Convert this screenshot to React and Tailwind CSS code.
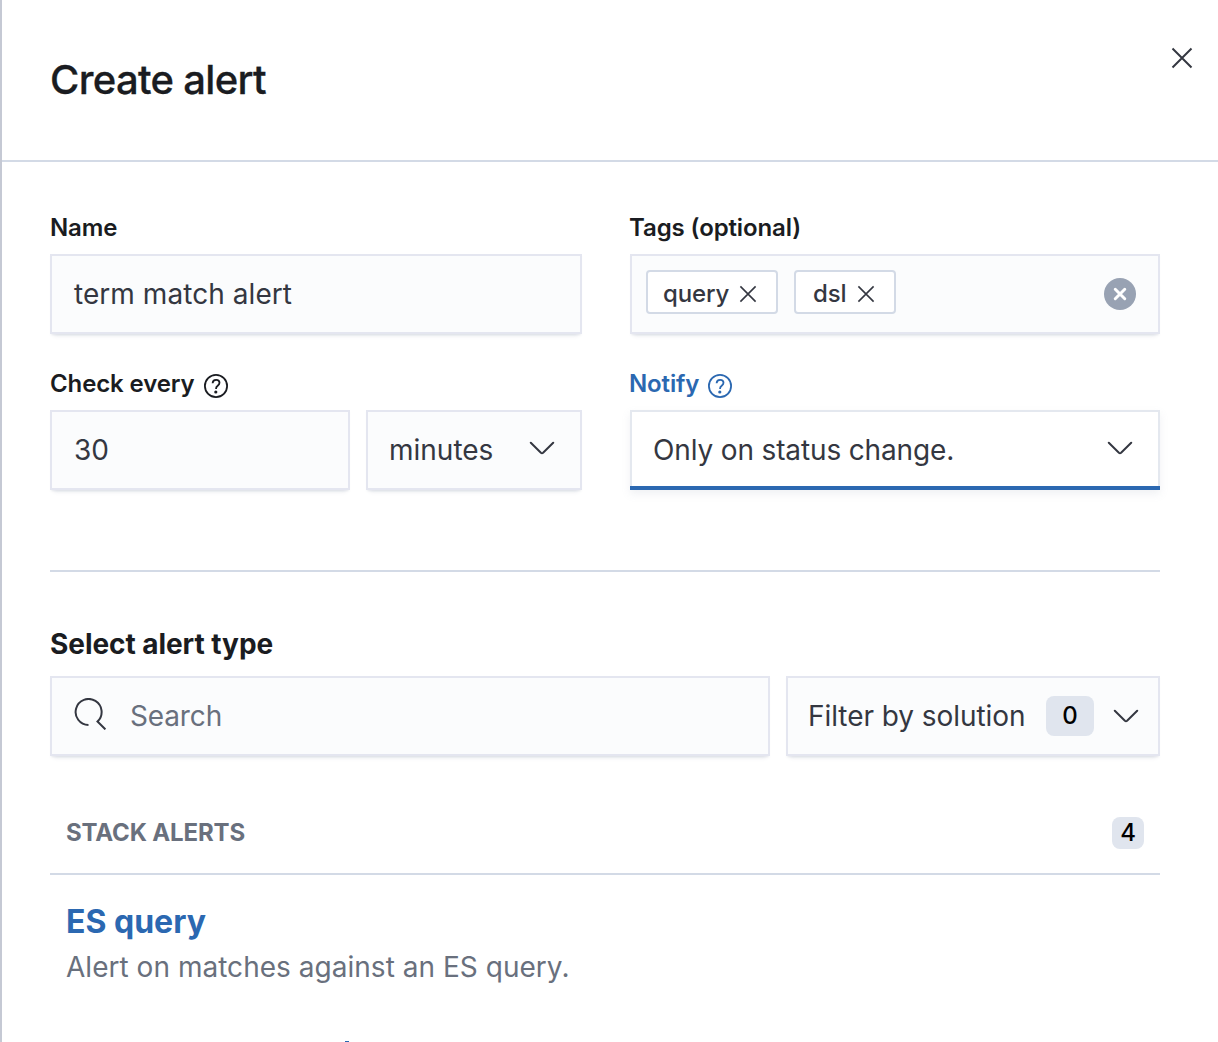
import React from "react";

const field =
  "flex h-20 items-center border-2 border-[#e4e6f0] bg-[#fbfcfd] text-[28px] shadow-[0_2px_2px_-1px_rgba(152,162,179,0.2),0_6px_4px_-4px_rgba(152,162,179,0.2)]";

const label = "flex h-11 items-start text-2xl leading-9 font-semibold tracking-[-0.005em]";

function Cross({ className }) {
  return (
    <svg viewBox="0 0 20 20" className={className} fill="none" stroke="currentColor">
      <path d="M0.5 0.5 19.5 19.5M19.5 0.5 0.5 19.5" />
    </svg>
  );
}

function Chevron({ className = "" }) {
  return (
    <svg viewBox="0 0 26 14" className={`h-3.5 w-[26px] shrink-0 ${className}`} fill="none" stroke="#343741" strokeWidth="2" strokeLinecap="round">
      <path d="M1.8 1.8 L11.9 11.8 Q13 12.8 14.1 11.8 L24.2 1.8" />
    </svg>
  );
}

function Help() {
  return (
    <svg viewBox="0 0 24 24" className="mt-2 ml-[9px] size-6 shrink-0" fill="none" stroke="currentColor" strokeWidth="1.8">
      <circle cx="12" cy="12" r="11.1" />
      <path d="M8.6 9.2C8.7 7 10.1 5.8 12.1 5.8c2 0 3.4 1.2 3.4 3 0 1.3-.7 2.100-1.800 2.900-1.100.8-1.600 1.300-1.600 2.600v.6" />
      <circle cx="11.8" cy="18" r="1.6" fill="currentColor" stroke="none" />
    </svg>
  );
}

function Tag({ label, className }) {
  return (
    <span className={`-mt-1 flex h-11 items-center rounded-[4px] border-2 border-[#d3dae6] bg-white pt-[3px] text-2xl font-medium tracking-[-0.005em] text-[#343741] ${className}`}>
      {label}
      <Cross className="mt-px ml-[11.2px] size-4 overflow-visible stroke-[2]" />
    </span>
  );
}

export default function App() {
  return (
    <div className="h-[1042px] overflow-hidden border-l-2 border-[#c5c9d4] bg-white font-['Inter',sans-serif] text-[#1a1c21]">
      <header className="flex h-[162px] items-start justify-between border-b-2 border-[#d3dae6] pl-12 pr-[26px]">
        <h1 className="mt-14 text-[40px] leading-12 font-medium tracking-[-0.017em] [-webkit-text-stroke:0.3px_currentColor]">Create alert</h1>
        <Cross className="mt-12 size-5 overflow-visible stroke-2 text-[#343741]" />
      </header>

      <main className="w-[1158px] pl-12">
        <div className="grid grid-cols-[532px_530px] gap-x-12 pt-12">
          <section>
            <div className={label}>Name</div>
            <div className={`${field} px-[22px] tracking-[0.002em] text-[#343741]`}>term match alert</div>
          </section>
          <section>
            <div className={`${label} -ml-px`}>Tags (optional)</div>
            <div className={`${field} pl-3.5 pr-[22px]`}>
              <Tag label="query" className="w-[132px] pl-[15px]" />
              <Tag label="dsl" className="ml-4 w-[102px] pl-[17px]" />
              <span className="ml-auto flex size-8 items-center justify-center rounded-full bg-[#98a2b3] text-white">
                <Cross className="size-2.5 overflow-visible stroke-[6] [stroke-linecap:round]" />
              </span>
            </div>
          </section>
          <section className="pt-8">
            <div className={label}>
              Check every <Help />
            </div>
            <div className="flex gap-4">
              <div className={`${field} w-[300px] px-[22px] text-[#343741]`}>30</div>
              <div className={`${field} w-[216px] justify-between pl-[21px] pr-[25px] text-[#343741]`}>
                minutes <Chevron className="-mt-1" />
              </div>
            </div>
          </section>
          <section className="pt-8">
            <div className={`${label} -ml-px text-[#2b68b1]`}>
              Notify <Help />
            </div>
            <div className="h-20 bg-[#2b68b1] pb-1 shadow-[0_4px_8px_rgba(152,162,179,0.15)]">
              <div className="flex h-19 items-center justify-between border-2 border-b-0 border-[#e4e8ef] bg-white pt-0.5 pl-[21px] pr-[25px] text-[28px] tracking-[-0.005em] text-[#343741]">
                Only on status change. <Chevron className="-mt-1" />
              </div>
            </div>
          </section>
        </div>

        <hr className="mt-20 border-t-2 border-[#d3dae6]" />

        <h2 className="mt-[52px] h-[52px] text-[28px] leading-10 font-bold tracking-[-0.002em]">Select alert type</h2>
        <div className="flex gap-4">
          <div className={`${field} w-[720px] gap-6 px-[22px] tracking-[-0.005em] text-[#69707d]`}>
            <svg viewBox="0 0 32 32" className="-mt-1 size-8 shrink-0" fill="none" stroke="#343741" strokeWidth="2">
              <path d="M14.500 27A13 13 0 1 1 23.500 23.500L31.400 31.400" />
            </svg>
            Search
          </div>
          <div className={`${field} w-[374px] pl-5 pr-[19px] tracking-[-0.002em] text-[#343741]`}>
            Filter by solution
            <span className="ml-auto mr-[19px] flex h-10 w-12 items-center justify-center rounded-lg bg-[#e0e5ee] text-2xl font-medium text-black">0</span>
            <Chevron />
          </div>
        </div>

        <div className="mt-[42px] flex h-[77px] items-start justify-between border-b-2 border-[#d3dae6] px-4 pt-[17px]">
          <h3 className="text-2xl leading-9 font-bold tracking-[-0.006em] text-[#69707d]">STACK ALERTS</h3>
          <span className="mt-0.5 flex size-8 items-center justify-center rounded-lg bg-[#e0e5ee] text-2xl font-medium text-black">4</span>
        </div>
        <div className="px-4 pt-[23px]">
          <div className="text-[32px] leading-12 font-bold text-[#2b68b1]">ES query</div>
          <p className="text-[28px] leading-[42px] tracking-[0.001em] text-[#69707d]">Alert on matches against an ES query.</p>
        </div>
        <div className="mt-[53px] ml-[295px] h-px w-1 bg-[#2b68b1]" />
      </main>
    </div>
  );
}
